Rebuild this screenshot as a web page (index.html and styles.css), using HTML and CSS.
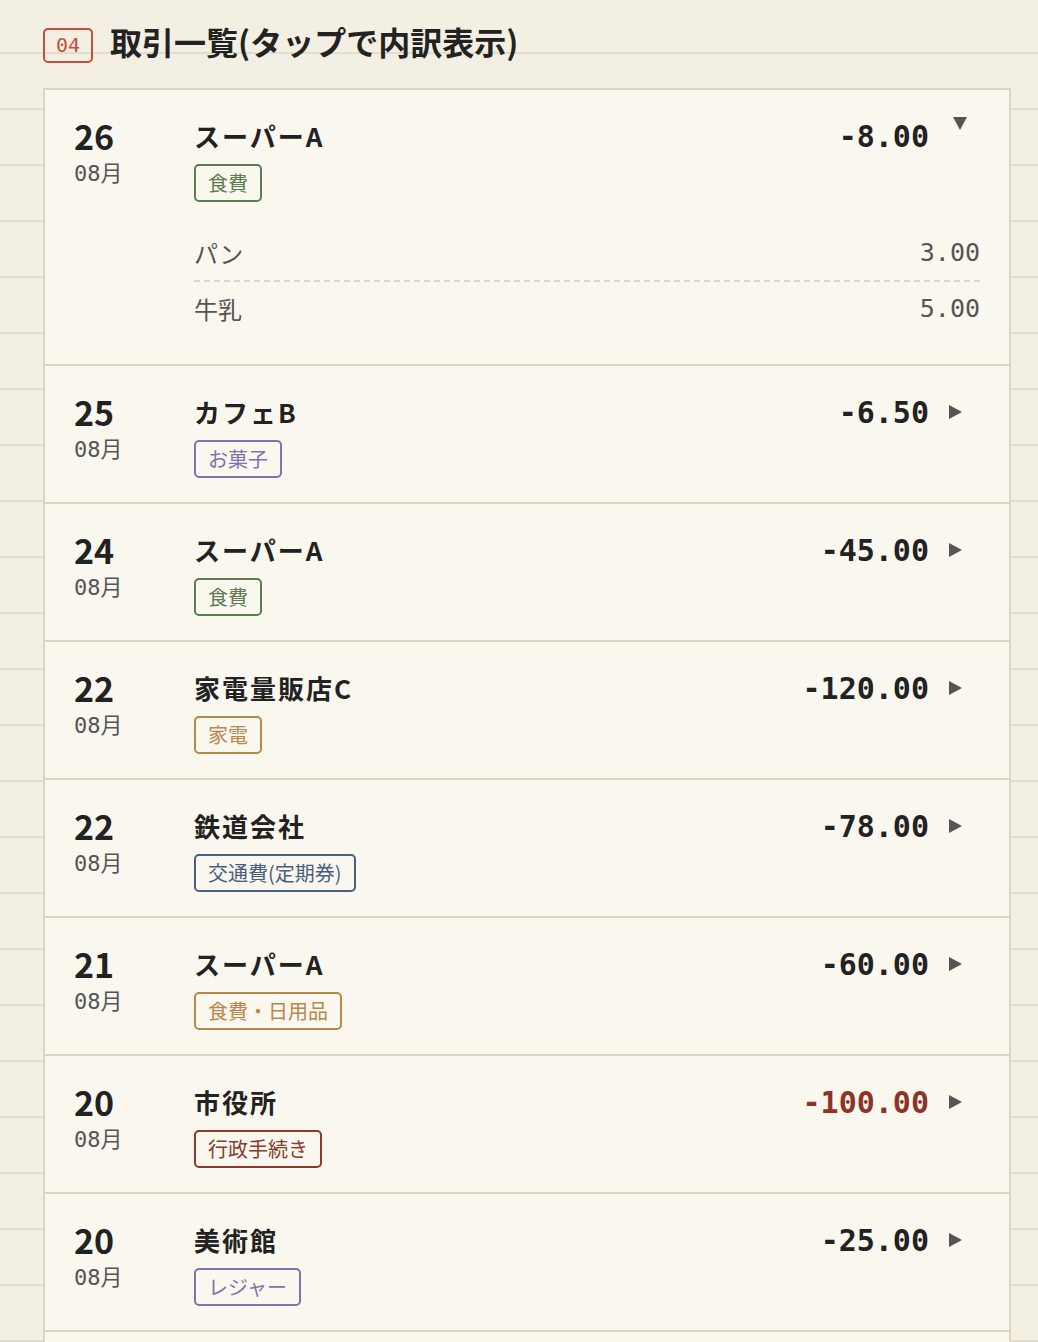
FILE: index.html
```html
<!DOCTYPE html>
<html lang="ja">

<head>
    <meta charset="UTF-8">
    <meta name="viewport" content="width=device-width, initial-scale=1.0">
    <title>取引一覧</title>
    <link rel="stylesheet" href="styles.css">
</head>

<body>
    <div class="header">
        <span class="badge">04</span>
        <h1>取引一覧(タップで内訳表示)</h1>
    </div>

    <div class="list">
        <div class="row open">
            <div class="row-main">
                <div class="date"><div class="day">26</div><div class="month">08月</div></div>
                <div class="info">
                    <div class="shop">スーパーA</div>
                    <span class="tag green">食費</span>
                </div>
                <div class="amount">-8.00</div>
                <div class="toggle"><span class="arrow down"></span></div>
            </div>
            <div class="details">
                <div class="item"><span class="item-name">パン</span><span class="item-price">3.00</span></div>
                <div class="item"><span class="item-name">牛乳</span><span class="item-price">5.00</span></div>
            </div>
        </div>

        <div class="row">
            <div class="row-main">
                <div class="date"><div class="day">25</div><div class="month">08月</div></div>
                <div class="info">
                    <div class="shop">カフェB</div>
                    <span class="tag purple">お菓子</span>
                </div>
                <div class="amount">-6.50</div>
                <div class="toggle"><span class="arrow"></span></div>
            </div>
        </div>

        <div class="row">
            <div class="row-main">
                <div class="date"><div class="day">24</div><div class="month">08月</div></div>
                <div class="info">
                    <div class="shop">スーパーA</div>
                    <span class="tag green">食費</span>
                </div>
                <div class="amount">-45.00</div>
                <div class="toggle"><span class="arrow"></span></div>
            </div>
        </div>

        <div class="row">
            <div class="row-main">
                <div class="date"><div class="day">22</div><div class="month">08月</div></div>
                <div class="info">
                    <div class="shop">家電量販店C</div>
                    <span class="tag brown">家電</span>
                </div>
                <div class="amount">-120.00</div>
                <div class="toggle"><span class="arrow"></span></div>
            </div>
        </div>

        <div class="row">
            <div class="row-main">
                <div class="date"><div class="day">22</div><div class="month">08月</div></div>
                <div class="info">
                    <div class="shop">鉄道会社</div>
                    <span class="tag navy">交通費(定期券)</span>
                </div>
                <div class="amount">-78.00</div>
                <div class="toggle"><span class="arrow"></span></div>
            </div>
        </div>

        <div class="row">
            <div class="row-main">
                <div class="date"><div class="day">21</div><div class="month">08月</div></div>
                <div class="info">
                    <div class="shop">スーパーA</div>
                    <span class="tag brown">食費・日用品</span>
                </div>
                <div class="amount">-60.00</div>
                <div class="toggle"><span class="arrow"></span></div>
            </div>
        </div>

        <div class="row">
            <div class="row-main">
                <div class="date"><div class="day">20</div><div class="month">08月</div></div>
                <div class="info">
                    <div class="shop">市役所</div>
                    <span class="tag red">行政手続き</span>
                </div>
                <div class="amount alert">-100.00</div>
                <div class="toggle"><span class="arrow"></span></div>
            </div>
        </div>

        <div class="row">
            <div class="row-main">
                <div class="date"><div class="day">20</div><div class="month">08月</div></div>
                <div class="info">
                    <div class="shop">美術館</div>
                    <span class="tag purple">レジャー</span>
                </div>
                <div class="amount">-25.00</div>
                <div class="toggle"><span class="arrow"></span></div>
            </div>
        </div>
    </div>
</body>

</html>
```

FILE: styles.css
```css
body {
    margin: 0;
    padding: 0;
    color: #222;
    font-family: "Noto Sans CJK JP", sans-serif;
    background-color: #f3efe3;
    background-image: repeating-linear-gradient(to bottom,
        transparent 0, transparent 52px,
        #e3ddcc 52px, #e3ddcc 54px,
        transparent 54px, transparent 56px);
}

.header {
    display: flex;
    align-items: center;
    gap: 17px;
    padding: 28px 0 0 43px;
    margin-bottom: 25px;
}

.badge {
    font-family: "DejaVu Sans Mono", monospace;
    font-size: 20px;
    line-height: 31px;
    padding: 0 11px;
    color: #c4503c;
    border: 2px solid #c4503c;
    border-radius: 5px;
}

h1 {
    margin: -10px 0 0;
    font-size: 32px;
    line-height: 40px;
    font-weight: 700;
    color: #222;
}

.list {
    width: 968px;
    margin-left: 43px;
    box-sizing: border-box;
    background: #faf7ef;
    border: 2px solid #ddd5c3;
    padding-bottom: 40px;
}

.row {
    padding: 28px 29px 24px;
    border-bottom: 2px solid #ddd5c3;
}

.row-main {
    display: flex;
    align-items: flex-start;
}

.date {
    width: 120px;
    flex-shrink: 0;
}

.day {
    font-size: 34px;
    line-height: 36px;
    font-weight: 700;
}

.month {
    margin-top: 6px;
    font-family: "DejaVu Sans Mono", "Noto Sans CJK JP", monospace;
    font-size: 22px;
    line-height: 28px;
    color: #555;
}

.info {
    flex: 1;
}

.shop {
    font-size: 26px;
    line-height: 36px;
    font-weight: 700;
    letter-spacing: 2px;
}

.tag {
    display: inline-block;
    margin-top: 10px;
    padding: 0 12px;
    font-size: 20px;
    line-height: 34px;
    border: 2px solid;
    border-radius: 5px;
}

.green { color: #5b7d52; }
.purple { color: #8470b0; }
.brown { color: #b7884a; }
.navy { color: #4a5f80; }
.red { color: #8c3a2e; }

.amount {
    font-family: "DejaVu Sans Mono", monospace;
    font-size: 30px;
    line-height: 36px;
    font-weight: 700;
    color: #222;
    margin-top: 1px;
}

.amount.alert {
    color: #8c3428;
}

.toggle {
    width: 32px;
    margin-left: 19px;
    flex-shrink: 0;
}

.arrow {
    display: block;
    width: 0;
    height: 0;
    margin: 11px 0 0 1px;
    border-left: 13px solid #555;
    border-top: 7.5px solid transparent;
    border-bottom: 7.5px solid transparent;
}

.arrow.down {
    margin: -1px 0 0 5px;
    border-top: 13px solid #555;
    border-left: 7.5px solid transparent;
    border-right: 7.5px solid transparent;
    border-bottom: none;
}

.details {
    margin: 24px 0 0 120px;
    padding-bottom: 4px;
}

.item {
    display: flex;
    justify-content: space-between;
    padding: 11px 0;
    line-height: 32px;
}

.item + .item {
    border-top: 2px dashed #dfd8c5;
}

.item-name {
    font-size: 24px;
    color: #555;
}

.item-price {
    font-family: "DejaVu Sans Mono", monospace;
    font-size: 25px;
    color: #555;
}
```
